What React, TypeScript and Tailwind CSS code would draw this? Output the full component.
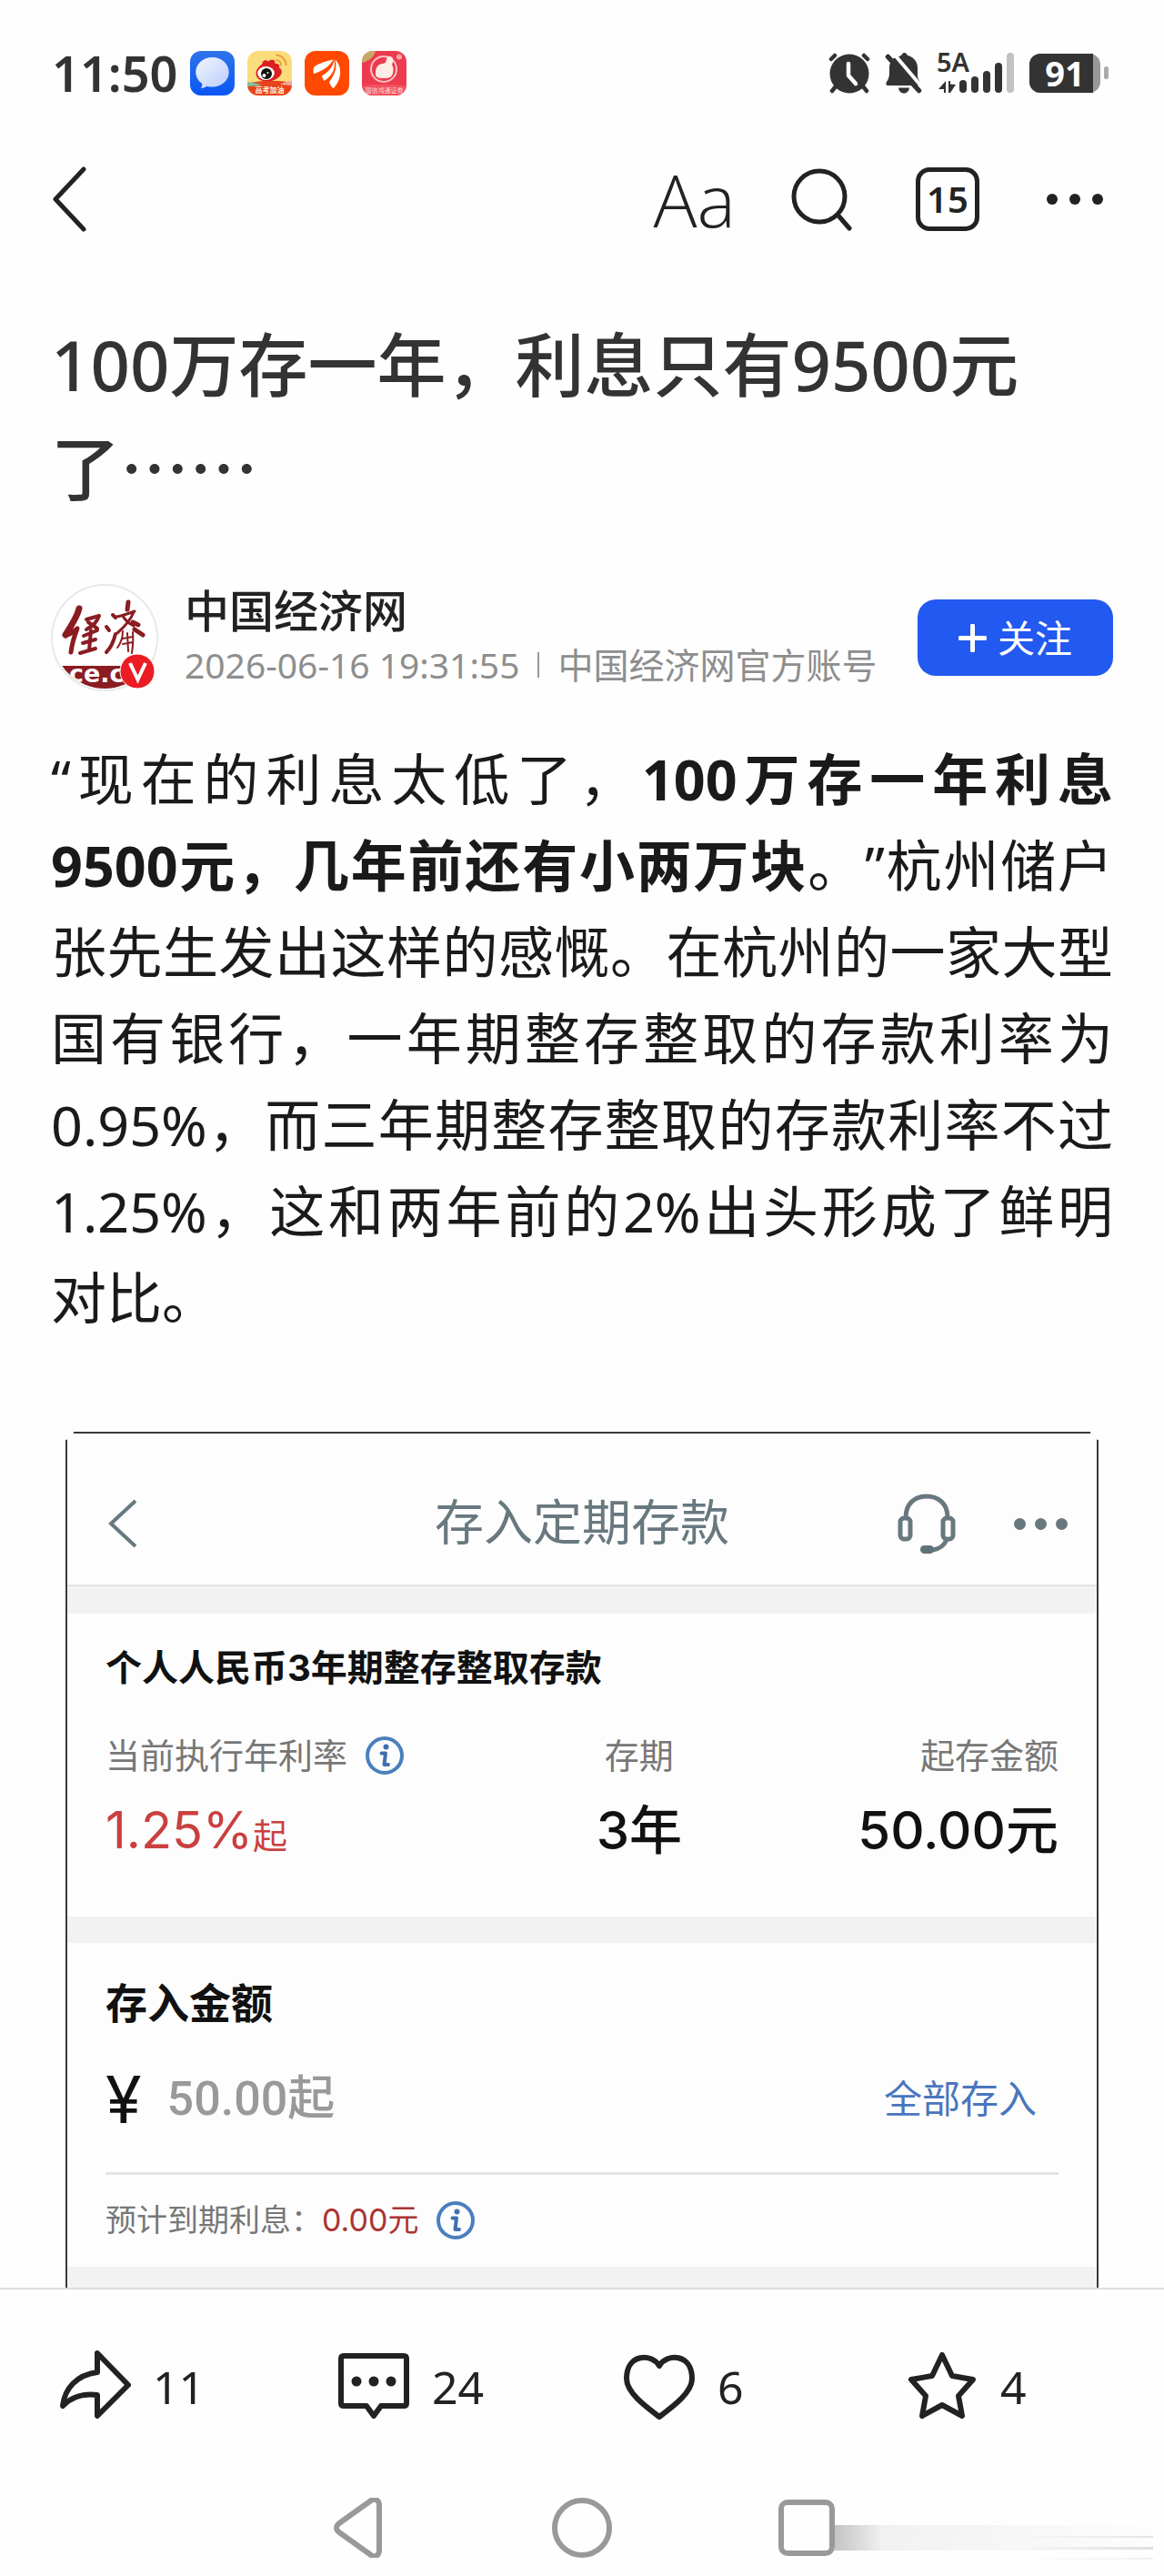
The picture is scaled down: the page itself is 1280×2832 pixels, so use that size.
import { useState } from "react";
import type { ReactNode } from "react";

const CJK = "font-['Noto_Sans','Noto_Sans_CJK_SC',sans-serif]";
const BANK = "font-['Inter','Noto_Sans_CJK_SC',sans-serif]";

function MessagesIcon() {
  return (
    <svg className="size-[49px]" viewBox="0 0 49 49" aria-hidden="true">
      <defs>
        <linearGradient id="msg-bg" x1="0" y1="0" x2="0" y2="1">
          <stop offset="0" stopColor="#2f73ea" />
          <stop offset="1" stopColor="#0a56f6" />
        </linearGradient>
        <linearGradient id="msg-fg" x1="0" y1="0" x2="1" y2="1">
          <stop offset="0" stopColor="#f2f6ff" />
          <stop offset="1" stopColor="#b9cdfb" />
        </linearGradient>
      </defs>
      <rect width="49" height="49" rx="12" fill="url(#msg-bg)" />
      <path
        d="M24.500 7c10.300 0 18.200 7.200 18.200 16.300S34.800 39.600 24.500 39.600c-2 0-4-.3-5.800-.9-1.600 1.300-4 2-6.700 2.200 1-1.400 1.400-3 1.300-4.900C9 33 6.300 28.500 6.300 23.300 6.300 14.200 14.200 7 24.500 7z"
        fill="url(#msg-fg)"
      />
    </svg>
  );
}

function WeiboIcon() {
  return (
    <svg className="size-[49px]" viewBox="0 0 49 49" aria-hidden="true">
      <defs>
        <clipPath id="weibo-clip">
          <rect width="49" height="49" rx="12" />
        </clipPath>
      </defs>
      <g clipPath="url(#weibo-clip)">
        <rect width="49" height="49" fill="#fbdc7c" />
        <path d="M0 36c14-4 35-4 49-1v14H0z" fill="#e8431c" />
        <path d="M0 34c8 1 12 2 16 4L0 39z" fill="#7cc0a0" />
        <path d="M36 37c5-3 9-4 13-4v5z" fill="#f4a5a0" />
        <path
          d="M9.500 25c0-5 3.500-8 7-11-.5-3 3-5.500 6.500-2.500C26 8.500 31.500 9.500 30.500 14c3.500-.5 5.500 1 4.500 4.500 3 1.500 3.500 4.500 2 7.500-2.500 4.500-9 7.500-15.500 7.500S9.500 30 9.500 25z"
          fill="#dd1f22"
        />
        <ellipse cx="20.500" cy="24.500" rx="9.300" ry="7.500" fill="#fff" />
        <circle cx="21" cy="25" r="6" fill="#111" />
        <circle cx="18.500" cy="27" r="2" fill="#fff" />
        <circle cx="22.500" cy="24" r="1" fill="#fff" />
        <path
          d="M32 4.500c6 .5 10.500 5 10.500 11M32 10c3 .5 5 2.500 5 5.500"
          fill="none"
          stroke="#e7a437"
          strokeWidth="2.200"
          strokeLinecap="round"
        />
        <text
          x="24.500"
          y="46"
          fontSize="8"
          fontWeight="700"
          textAnchor="middle"
          fill="#fff3dc"
        >
          高考加油
        </text>
      </g>
    </svg>
  );
}

function BrokerIcon() {
  return (
    <svg className="size-[49px]" viewBox="0 0 49 49" aria-hidden="true">
      <rect width="49" height="49" rx="12" fill="#ff4800" />
      <path
        d="M31.500 9.500C22 11.500 13.500 14.500 10.500 17.500c-1.300 3-1.200 7-.2 7.500 7.500-2.500 16.200-6.500 21.200-15.500z"
        fill="#fff"
      />
      <path
        d="M32.500 9.500c-1 9-8 14.500-13.500 18 .3 2.500 1.700 5 2.700 5.200C29.500 28 34.500 20 32.500 9.500z"
        fill="#fff"
      />
      <path
        d="M33.700 9.500c2.500 10-1.700 18.500-6.700 24.500.5 3 3 6 5 7C38.500 34 43.500 20 33.700 9.500z"
        fill="#fff"
      />
    </svg>
  );
}

function SecuritiesIcon() {
  return (
    <svg className="size-[49px]" viewBox="0 0 49 49" aria-hidden="true">
      <defs>
        <clipPath id="sec-clip">
          <rect width="49" height="49" rx="12" />
        </clipPath>
      </defs>
      <g clipPath="url(#sec-clip)">
        <rect width="49" height="49" fill="#ee3a4e" />
        <path d="M0 0h15C13 7 8 11 0 13z" fill="#c9a86a" />
        <path d="M0 38q24-3 49 0v11H0z" fill="#f0525f" />
        <circle cx="24" cy="20" r="14" fill="none" stroke="#f9c6c5" strokeWidth="2" />
        <path
          d="M17 17c2-3 6-3 9-4 1-3 1-7 4-7 5 0 5 5 3 9 2 3 2 8 0 12-2 3-6 3-10 3-5 0-8-1-8-5 0-3 0-6 2-8z"
          fill="#ffece4"
        />
        <circle cx="41" cy="6.500" r="3" fill="#f7a8a8" />
        <text x="24.500" y="45.500" fontSize="7" textAnchor="middle" fill="#ffdcd8">
          国信鸿通证券
        </text>
      </g>
    </svg>
  );
}

function AlarmIcon() {
  return (
    <svg className="h-[45px] w-[46px]" viewBox="0 0 46 45" aria-hidden="true">
      <g stroke="#333" strokeWidth="4.500" strokeLinecap="round">
        <path d="M3 7l4-4M43 7l-4-4M4 42l4-5M42 42l-4-5" />
      </g>
      <circle cx="23" cy="23" r="21.500" fill="#333" />
      <path
        d="M22 12v13l8 9"
        fill="none"
        stroke="#fff"
        strokeWidth="4.500"
        strokeLinecap="round"
        strokeLinejoin="round"
      />
    </svg>
  );
}

function MutedBellIcon() {
  return (
    <svg className="h-[46px] w-[41px]" viewBox="0 0 41 46" aria-hidden="true">
      <path
        d="M16 5c1-1 2.500-1 3-2.500 1-2 4-2 5 0 .5 1.500 2 1.500 3.500 2.300C33 7.500 36 12 36 18v9c0 2 3 6 3 8 0 1.500-1 2-2 2H4c-3 0-3-2-2-4 2-3 3-6 3-9v-6c0-5 2-9 5-11z"
        fill="#333"
      />
      <path d="M15 39.500h12c-.5 3.500-2.500 6-6 6s-5.500-2.500-6-6z" fill="#333" />
      <path d="M8 0l34 40" stroke="#fefefe" strokeWidth="4" />
      <path d="M3.500 5.500l34 37" stroke="#333" strokeWidth="5.500" strokeLinecap="round" />
    </svg>
  );
}

function SignalIcon() {
  return (
    <svg className="h-[46px] w-[86px] overflow-visible" viewBox="0 0 86 46" aria-hidden="true">
      <text
        x="0"
        y="22"
        fontSize="29"
        fontWeight="600"
        fill="#333"
        fontFamily="Noto Sans, sans-serif"
      >
        5A
      </text>
      <path d="M10 32v13h-2v-4H2zM13 32h2v3.500l6 .5-6 9h-2z" fill="#333" />
      <g fill="#333">
        <rect x="25" y="31" width="8" height="14" rx="4" />
        <rect x="38" y="27" width="8" height="18" rx="4" />
        <rect x="51" y="21" width="8" height="24" rx="4" />
        <rect x="64" y="12" width="8" height="33" rx="4" />
      </g>
      <rect x="77" y="1" width="8" height="44" rx="4" fill="#c2c2c2" />
    </svg>
  );
}

function Battery({ level }: { level: number }) {
  return (
    <div className="flex items-center gap-1">
      <div className="flex h-[43px] w-[78px] rounded-[12px] bg-[#999]">
        <div className="flex w-[70px] items-center justify-center rounded-l-[12px] bg-[#333] pl-2 text-[38px] leading-[43px] font-bold text-white">
          {level}
        </div>
      </div>
      <div className="h-[14px] w-[5px] rounded-full bg-[#aaa]" />
    </div>
  );
}

function StatusBar() {
  return (
    <div className="flex h-[160px] items-center justify-between pr-[61px] pl-[57px] text-[#333]">
      <div className="flex items-center gap-[14px]">
        <span className="text-[54px] leading-none font-semibold">11:50</span>
        <MessagesIcon />
        <WeiboIcon />
        <BrokerIcon />
        <SecuritiesIcon />
      </div>
      <div className="flex items-center gap-4">
        <AlarmIcon />
        <MutedBellIcon />
        <SignalIcon />
        <Battery level={91} />
      </div>
    </div>
  );
}

function Toolbar() {
  return (
    <nav className="flex h-[118px] items-center justify-between pr-[67px] pl-[58px] text-[#222]">
      <button type="button" aria-label="返回">
        <svg className="h-[72px] w-[38px]" viewBox="0 0 38 72" aria-hidden="true">
          <path
            d="M34 3L3 36l31 33"
            fill="none"
            stroke="currentColor"
            strokeWidth="5"
            strokeLinecap="round"
            strokeLinejoin="round"
          />
        </svg>
      </button>
      <div className="flex items-center">
        <button
          type="button"
          className="font-['Open_Sans',sans-serif] text-[80px] leading-none font-light"
        >
          Aa
        </button>
        <button type="button" aria-label="搜索" className="ml-[60px]">
          <svg className="size-[70px]" viewBox="0 0 70 70" aria-hidden="true">
            <g fill="none" stroke="currentColor" strokeWidth="5" strokeLinecap="round">
              <circle cx="32" cy="32" r="28" />
              <path d="M52 52l13 15" />
            </g>
          </svg>
        </button>
        <button
          type="button"
          className="ml-[68px] flex size-[70px] items-center justify-center rounded-[15px] border-5 border-[#222] text-[40px] leading-none font-semibold"
        >
          15
        </button>
        <button type="button" aria-label="更多" className="ml-[74px] flex gap-[13px]">
          <span className="size-3 rounded-full bg-[#222]" />
          <span className="size-3 rounded-full bg-[#222]" />
          <span className="size-3 rounded-full bg-[#222]" />
        </button>
      </div>
    </nav>
  );
}

function Avatar() {
  return (
    <svg className="size-[118px] shrink-0" viewBox="0 0 118 118" role="img" aria-label="中国经济网">
      <defs>
        <clipPath id="avatar-clip">
          <circle cx="59" cy="59" r="56" />
        </clipPath>
      </defs>
      <circle cx="59" cy="59" r="58" fill="#fff" stroke="#e9e9e9" strokeWidth="2" />
      <g clipPath="url(#avatar-clip)">
        <rect y="90" width="118" height="28" fill="#8a1c22" />
        <text
          x="20"
          y="108"
          fontSize="27"
          fontWeight="700"
          fill="#fff"
          fontFamily="DejaVu Sans, sans-serif"
        >
          ce.c
        </text>
      </g>
      {/* brush-written masthead */}
      <g fill="none" stroke="#8a1c22" strokeLinecap="round" strokeLinejoin="round">
        <path d="M31 27c-2 9-8 18-15 29" strokeWidth="7" />
        <path d="M16 57c6-2 9-5 13-8-4 10-6 18-7 26" strokeWidth="5" />
        <path d="M39 39l14-4c-3 8-7 11-14 15M41 42l10 7" strokeWidth="4" />
        <path d="M36 57l15-6M44 51l-2 22M35 65l14-4M32 76l17-5" strokeWidth="4" />
        <path d="M68 34l3 3M61 47l3 4M61 75c5-5 8-12 10-20" strokeWidth="4" />
        <path d="M85 20l-1 8" strokeWidth="5" />
        <path d="M72 36c8-1 14-4 20-6M79 35c3 6 8 9 12 11M91 31c-4 10-10 16-18 23" strokeWidth="3" />
        <path d="M90 42l6 3M92 50l9 6" strokeWidth="5" />
        <path d="M79 52c0 8-2 13-6 18M84 54l1 20M90 53c1 9 0 16-1 23M79 60l11-2M79 66l11-2" strokeWidth="2" />
      </g>
      <circle cx="95" cy="96" r="19" fill="#ec1c24" stroke="#fff" strokeWidth="1" />
      <path d="M87 87l8.500 18 8.500-18" fill="none" stroke="#fff" strokeWidth="4" />
    </svg>
  );
}

function AuthorRow() {
  const [followed, setFollowed] = useState(false);

  return (
    <div className="mt-[71px] flex items-center">
      <Avatar />
      <div className="ml-[29px] flex-1 whitespace-nowrap">
        <p className="text-[49px] leading-[60px] font-medium text-[#222]">中国经济网</p>
        <p className="flex items-center text-[39px] leading-[60px] text-[#8e8e8e]">
          <time>2026-06-16 19:31:55</time>
          <span className="mx-5 h-7 w-[2px] bg-[#999]" />
          中国经济网官方账号
        </p>
      </div>
      <button
        type="button"
        aria-pressed={followed}
        onClick={() => setFollowed(!followed)}
        className="flex h-[84px] w-[215px] shrink-0 items-center justify-center gap-3 rounded-[20px] bg-[#2259f0] text-[41px] leading-none text-white"
      >
        <svg className="size-[31px]" viewBox="0 0 31 31" aria-hidden="true">
          <path d="M15.500 2v27M2 15.500h27" stroke="currentColor" strokeWidth="5" strokeLinecap="round" />
        </svg>
        关注
      </button>
    </div>
  );
}

function InfoIcon() {
  return (
    <svg className="size-[42px] shrink-0" viewBox="0 0 42 42" aria-hidden="true">
      <circle cx="21" cy="21" r="19" fill="none" stroke="#4a7fbd" strokeWidth="4" />
      <circle cx="22.500" cy="11.500" r="3" fill="#3f6fb0" />
      <path
        d="M17.500 18.500h4.500l-1.500 12.500h4.500"
        fill="none"
        stroke="#3f6fb0"
        strokeWidth="4"
        strokeLinecap="round"
        strokeLinejoin="round"
      />
    </svg>
  );
}

function HeadsetIcon() {
  return (
    <svg className="h-[66px] w-[64px]" viewBox="0 0 64 66" aria-hidden="true">
      <g fill="none" stroke="#68787f" strokeWidth="5" strokeLinecap="round">
        <rect x="3" y="27" width="11" height="23" rx="4" />
        <rect x="50" y="27" width="11" height="23" rx="4" />
        <path d="M9 26C9 11 19 3 32 3s23 8 23 23M54 51c-3 6-8 10-15 11" />
      </g>
      <rect x="25" y="57" width="15" height="9" rx="4.500" fill="#5f717b" />
    </svg>
  );
}

function Band({ className }: { className: string }) {
  return <div className={`bg-[#f2f2f2] ${className}`} />;
}

function DepositCard() {
  const [amount, setAmount] = useState("");

  return (
    <section
      className={`relative mx-4 mt-[100px] border-x-2 border-t-2 border-[#3a3a3a] bg-[#fdfdfd] ${BANK}`}
    >
      {/* corner notches hide the frame where the card is rounded */}
      <span className="absolute -top-[2px] -left-[2px] h-[9px] w-[9px] rounded-br-full bg-[#fefefe]" />
      <span className="absolute -top-[2px] -right-[2px] h-[9px] w-[9px] rounded-bl-full bg-[#fefefe]" />
      <header className="flex h-[168px] items-center justify-between border-b-2 border-[#e2e2e2] px-8 pt-8 text-[#68787f]">
        <div className="flex flex-1">
          <button type="button" aria-label="返回" className="pl-3">
            <svg className="h-[56px] w-[34px]" viewBox="0 0 34 56" aria-hidden="true">
              <path d="M31 3L4 28l27 25" fill="none" stroke="currentColor" strokeWidth="4" />
            </svg>
          </button>
        </div>
        <h2 className="text-[54px] leading-none">存入定期存款</h2>
        <div className="flex flex-1 items-center justify-end gap-16">
          <button type="button" aria-label="客服">
            <HeadsetIcon />
          </button>
          <button type="button" aria-label="更多" className="flex gap-[10px]">
            <span className="size-[13px] rounded-full bg-[#68787f]" />
            <span className="size-[13px] rounded-full bg-[#68787f]" />
            <span className="size-[13px] rounded-full bg-[#68787f]" />
          </button>
        </div>
      </header>
      <Band className="h-[30px]" />

      <div className="h-[333px] px-[42px] pt-[30px]">
        <h3 className="text-[40px] leading-[60px] font-bold text-[#111]">
          个人人民币3年期整存整取存款
        </h3>
        <dl className="mt-9 grid grid-cols-[12fr_4fr_9fr]">
          <div>
            <dt className="flex items-center gap-5 text-[38px] leading-[60px] text-[#777]">
              当前执行年利率
              <InfoIcon />
            </dt>
            <dd className="mt-3 text-[56px] leading-[80px] text-[#c9403f]">
              1.25%<span className="text-[38px]">起</span>
            </dd>
          </div>
          <div className="text-center">
            <dt className="text-[38px] leading-[60px] text-[#777]">存期</dt>
            <dd className="mt-3 text-[58px] leading-[80px] font-medium text-[#111]">3年</dd>
          </div>
          <div className="text-right">
            <dt className="text-[38px] leading-[60px] text-[#777]">起存金额</dt>
            <dd className="mt-3 text-[58px] leading-[80px] font-medium text-[#111]">50.00元</dd>
          </div>
        </dl>
      </div>
      <Band className="h-[29px]" />

      <div className="h-[356px] px-[42px] pt-[34px]">
        <label htmlFor="amount" className="block text-[46px] leading-[64px] font-bold text-[#111]">
          存入金额
        </label>
        <div className="mt-8 flex h-[84px] items-center">
          <span className="text-[72px] leading-[84px] text-[#111]">¥</span>
          <input
            id="amount"
            value={amount}
            onChange={(e) => setAmount(e.target.value)}
            placeholder="50.00起"
            className="ml-7 min-w-0 flex-1 font-['Roboto','Noto_Sans_CJK_SC',sans-serif] text-[52px] leading-[84px] outline-none placeholder:font-medium placeholder:text-[#999]"
          />
          <button type="button" className="mr-6 text-[42px] leading-[60px] text-[#4a76bd]">
            全部存入
          </button>
        </div>
        <div className="mt-[38px] flex items-center border-t-3 border-[#e4e4e4] pt-5 text-[34px] leading-[60px] text-[#777]">
          预计到期利息：
          <span className="mr-5 text-[#a93434]">0.00元</span>
          <InfoIcon />
        </div>
      </div>
      <Band className="h-[23px]" />
    </section>
  );
}

function Article() {
  return (
    <article className="px-14">
      <h1 className="mt-[68px] text-[76px] leading-[110px] font-medium text-[#333]">
        100万存一年，利息只有9500元了
        <span className="font-['Noto_Sans_CJK_SC',sans-serif]">……</span>
      </h1>
      <AuthorRow />
      <p className="mt-12 text-justify text-[61px] leading-[95px] text-[#1a1a1a] [text-spacing-trim:space-all]">
        “现在的利息太低了，
        <strong className="font-bold">100万存一年利息9500元，几年前还有小两万块</strong>
        。”杭州储户张先生发出这样的感慨。在杭州的一家大型国有银行，一年期整存整取的存款利率为0.95%，而三年期整存整取的存款利率不过1.25%，这和两年前的2%出头形成了鲜明对比。
      </p>
      <DepositCard />
    </article>
  );
}

function Action({ label, count, children }: { label: string; count: number; children: ReactNode }) {
  return (
    <button type="button" aria-label={label} className="flex items-center gap-6">
      <svg
        className="size-[80px]"
        viewBox="0 0 80 80"
        fill="none"
        stroke="currentColor"
        strokeWidth="6"
        strokeLinecap="round"
        strokeLinejoin="round"
        aria-hidden="true"
      >
        {children}
      </svg>
      <span className="text-[50px] leading-none">{count}</span>
    </button>
  );
}

function BottomBar() {
  return (
    <footer className="border-t-2 border-[#dcdcdc]">
      <div className="grid h-[213px] grid-cols-[307fr_314fr_311fr_284fr] pl-16 text-[#222]">
        <Action label="分享" count={11}>
          <path d="M43 3l34 35-34 34V49C28 47 14 51 5 61 7 42 20 27 43 24z" />
        </Action>
        <Action label="评论" count={24}>
          <path d="M7 6h66q3 0 3 3v49q0 3-3 3H48l-8 11-8-11H7q-3 0-3-3V9q0-3 3-3z" />
          <g fill="currentColor" stroke="none">
            <circle cx="21" cy="34" r="5.500" />
            <circle cx="40" cy="34" r="5.500" />
            <circle cx="59" cy="34" r="5.500" />
          </g>
        </Action>
        <Action label="喜欢" count={6}>
          <path d="M40 17C32 3 4 3 4 31c0 15 20 30 36 42 16-12 36-27 36-42C76 3 48 3 40 17z" />
        </Action>
        <Action label="收藏" count={4}>
          <path d="M40 5l11 23 23 4-16 18 4 22-22-12-22 12 4-22L6 32l23-4z" />
        </Action>
      </div>
      <div className="flex h-[100px] items-center justify-center gap-[181px] pb-[2px] text-[#999]">
        <button type="button" aria-label="后退">
          <svg className="size-[66px]" viewBox="2 2 66 66" aria-hidden="true">
            <path
              d="M50 5L15 30q-6 5 0 10l35 25q7 4 9-4V9q-2-8-9-4z"
              fill="none"
              stroke="currentColor"
              strokeWidth="6"
              strokeLinejoin="round"
            />
          </svg>
        </button>
        <button type="button" aria-label="主页" className="size-[66px] rounded-full border-6 border-[#999]" />
        <div className="flex size-[66px] items-center justify-center">
          <div className="relative size-[62px]">
            <button
              type="button"
              aria-label="最近任务"
              className="block size-full rounded-[10px] border-6 border-[#999]"
            />
            <span className="absolute top-7 left-full h-7 w-[350px] bg-linear-to-r from-[#c4c4c4] via-[#f1f1f1] via-15% to-[#fdfdfd]" />
            <span className="absolute top-10 left-full ml-[200px] h-[2px] w-[150px] bg-linear-to-r from-transparent to-[#e4e4e4]" />
            <span className="absolute top-[52px] left-full ml-[200px] h-[3px] w-[150px] bg-linear-to-r from-transparent to-[#dedede]" />
            <span className="absolute top-[64px] left-full ml-[200px] h-[2px] w-[150px] bg-linear-to-r from-transparent to-[#f0f0f0]" />
          </div>
        </div>
      </div>
    </footer>
  );
}

export default function App() {
  return (
    <div lang="zh-CN" className={`overflow-hidden bg-[#fefefe] ${CJK}`}>
      <StatusBar />
      <Toolbar />
      <main>
        <Article />
      </main>
      <BottomBar />
    </div>
  );
}
